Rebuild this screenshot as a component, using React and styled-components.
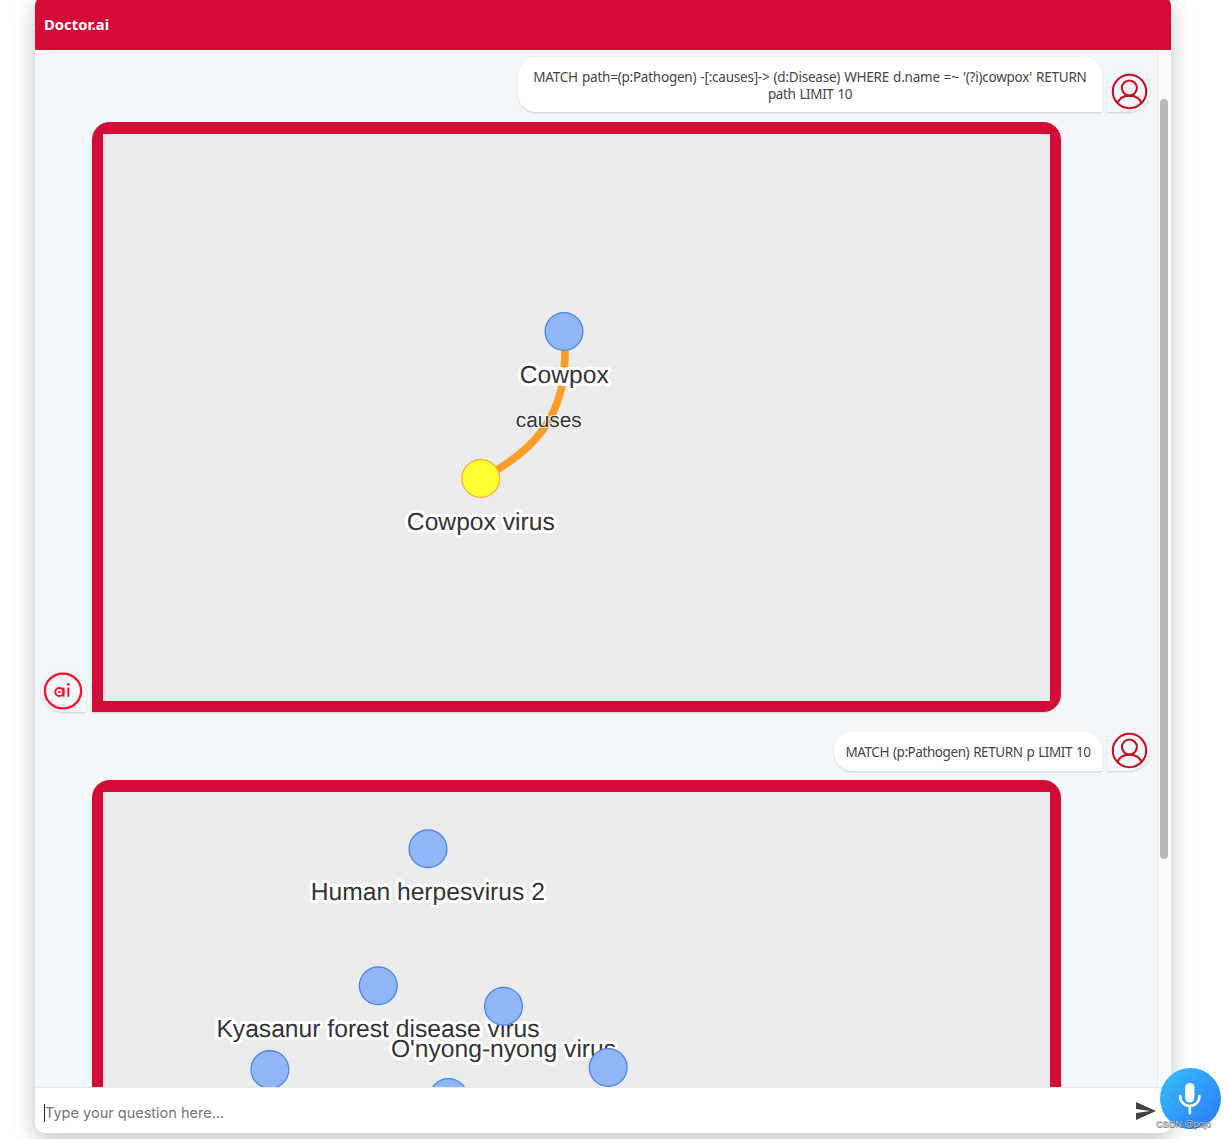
import React from 'react';
import styled, { createGlobalStyle } from 'styled-components';

const RED = '#d30b37';

const GlobalStyle = createGlobalStyle`
  * { box-sizing: border-box; }
  html, body { margin: 0; background: #fff; }
  body { height: 1139px; overflow: hidden; font-family: "Noto Sans", "Open Sans", sans-serif; }
`;

const Page = styled.div`
  position: relative;
  height: 1139px;
  overflow: hidden;
  padding-left: 35px;
`;

const Window = styled.div`
  display: flex;
  flex-direction: column;
  width: 1136px;
  height: 1137px;
  margin-top: -4px;
  border-radius: 10px;
  overflow: hidden;
  background: #fff;
  box-shadow: 0 11px 22px rgba(0, 0, 0, 0.17), 0 0 30px rgba(0, 0, 0, 0.08);
`;

const Header = styled.header`
  flex: none;
  display: flex;
  align-items: center;
  height: 54.3px;
  padding: 1px 9px 0;
  background: ${RED};
  color: #fff;
`;

const Title = styled.h1`
  margin: 0;
  font-size: 14.8px;
  line-height: 20px;
  font-weight: 700;
`;

const Body = styled.div`
  flex: 1;
  min-height: 0;
  display: flex;
  background: #f3f7fa;
`;

const Messages = styled.div`
  flex: 1;
  min-width: 0;
  overflow: hidden;
  padding: 7px 7px 0 6px;
`;

const Track = styled.div`
  flex: none;
  width: 14px;
  padding: 49px 3px 0 2px;
  background: #fafafa;
  border-left: 1px solid #e6e8ea;
`;

const Thumb = styled.div`
  width: 8px;
  height: 760px;
  border-radius: 4px;
  background: #b9b9b9;
`;

const Row = styled.div`
  display: flex;
  align-items: flex-end;
  justify-content: ${(p) => (p.$user ? 'flex-end' : 'flex-start')};
  height: ${(p) => p.$h}px;
  margin-bottom: ${(p) => p.$gap || 0}px;
  gap: ${(p) => (p.$user ? 5 : 6)}px;
`;

const Bubble = styled.div`
  width: ${(p) => p.$w}px;
  height: ${(p) => p.$h}px;
  display: flex;
  flex-direction: column;
  align-items: center;
  justify-content: center;
  padding-top: 2px;
  border-radius: 18px 18px 0 18px;
  background: #fff;
  color: #454545;
  font-size: 13.5px;
  line-height: 17px;
  word-spacing: 0.8px;
  white-space: nowrap;
  box-shadow: 0 1px 2px rgba(0, 0, 0, 0.15);
`;

const Line = styled.span`
  letter-spacing: ${(p) => p.$track || 0}px;
`;

const Avatar = styled.div`
  flex: none;
  display: flex;
  align-items: center;
  justify-content: center;
  width: ${(p) => (p.$user ? 43 : 45)}px;
  height: 43px;
  padding: ${(p) => (p.$user ? '1px 0 0 1px' : '0 2px 0 0')};
  border-radius: ${(p) => (p.$user ? '50% 50% 50% 0' : '50% 50% 0 50%')};
  box-shadow: 0 1px 2px rgba(0, 0, 0, 0.15);
  svg { display: block; }
`;

const GraphCard = styled.div`
  flex: none;
  width: 969px;
  height: 590px;
  padding: 11.5px 11px 11px 11px;
  border-radius: 18px 18px 18px 0;
  background: ${RED};
  box-shadow: 0 1px 2px rgba(0, 0, 0, 0.15);
`;

const Graph = styled.svg`
  display: block;
  background: #ebebeb;
  width: 947px;
  height: 567.5px;
  font-family: "Liberation Sans", Arial, sans-serif;
`;

const Footer = styled.footer`
  flex: none;
  display: flex;
  align-items: center;
  justify-content: space-between;
  height: 46px;
  padding: 1px 15px 0 9px;
  border-top: 1px solid #e9e9e9;
  background: #fff;
  svg { display: block; }
`;

const Prompt = styled.div`
  display: flex;
  align-items: center;
  padding-top: 3px;
  color: #757575;
  font-family: Inter, "Noto Sans", sans-serif;
  font-size: 14.52px;
  line-height: 20px;
`;

const Caret = styled.span`
  width: 1px;
  height: 18px;
  background: #222;
`;

const MicButton = styled.button`
  position: absolute;
  left: 1159.7px;
  top: 1068px;
  width: 61px;
  height: 61px;
  padding: 0;
  border: 0;
  border-radius: 50%;
  display: flex;
  align-items: center;
  justify-content: center;
  background: linear-gradient(135deg, #35bdfd 5%, #2b80fb 90%);
`;

const Watermark = styled.div`
  position: absolute;
  left: 1156px;
  top: 1118px;
  font: 9.3px/12px "Liberation Sans", Arial, sans-serif;
  letter-spacing: -0.1px;
  color: rgba(225, 228, 232, 0.95);
  text-shadow: 0 0 1px rgba(40, 40, 40, 0.8), 0.5px 0.5px 0.5px rgba(40, 40, 40, 0.6);
`;

const UserIcon = () => (
  <svg width="37" height="37" viewBox="0 0 37 37" fill="none" stroke="#c60f22" strokeWidth="2.1">
    <circle cx="18.5" cy="18.5" r="16.7" />
    <circle cx="18.4" cy="15" r="7.5" />
    <path d="M6.6 30.4C7.4 26 12 22.6 18.4 22.6S29.6 26 30.4 30.4" />
  </svg>
);

const AiIcon = () => (
  <svg width="40" height="38" viewBox="0 0 40 38" fill="none" stroke="#fb0f2b" strokeWidth="2.3">
    <ellipse cx="20" cy="19" rx="18.1" ry="17.4" />
    <circle cx="16.4" cy="20" r="4.1" strokeWidth="2" />
    <circle cx="16.4" cy="20" r="1.2" fill="#fb0f2b" stroke="none" />
    <path d="M20.6 15.4V24.8M25.3 15.4V24.8" strokeWidth="1.9" />
    <circle cx="25.3" cy="12.4" r="1.3" fill="#fb0f2b" stroke="none" />
  </svg>
);

const SendIcon = () => (
  <svg width="20" height="18" viewBox="2 3 21 18" preserveAspectRatio="none" fill="#424242">
    <path d="M2.01 21L23 12 2.01 3 2 10l15 2-15 2z" />
  </svg>
);

const MicIcon = () => (
  <svg width="24" height="34" viewBox="0 0 24 34" fill="none" stroke="#fff" strokeWidth="2.6" strokeLinecap="round">
    <rect x="7.2" y="1" width="9.2" height="19.5" rx="4.6" fill="#fff" stroke="none" />
    <path d="M2.2 14V14.4a9.6 9.6 0 0 0 19.2 0V14M11.8 24.5v6.7" />
  </svg>
);

const Node = ({ x, y, fill = '#90b6f8', stroke = '#4280ea' }) => (
  <circle cx={x} cy={y} r="18.9" fill={fill} stroke={stroke} strokeWidth="1.2" />
);

const Label = ({ x, y, size = 24.65, halo = 6, children }) => (
  <text
    x={x}
    y={y}
    textAnchor="middle"
    textRendering="geometricPrecision"
    fontSize={size}
    fill="#343434"
    stroke="#fff"
    strokeWidth={halo}
    strokeLinejoin="round"
    paintOrder="stroke"
  >
    {children}
  </text>
);

export default function App() {
  return (
    <>
      <GlobalStyle />
      <Page>
        <Window>
          <Header>
            <Title>Doctor.ai</Title>
          </Header>
          <Body>
            <Messages>
              <Row $user $h={55} $gap={10}>
                <Bubble $w={584} $h={55}>
                  <Line $track={-0.23}>MATCH path=(p:Pathogen) -[:causes]-&gt; (d:Disease) WHERE d.name =~ '(?i)cowpox' RETURN</Line>
                  <Line $track={-0.38}>path LIMIT 10</Line>
                </Bubble>
                <Avatar $user><UserIcon /></Avatar>
              </Row>
              <Row $h={590} $gap={16}>
                <Avatar><AiIcon /></Avatar>
                <GraphCard>
                  <Graph viewBox="103 134 947 567.5">
                    <path d="M564 331.5C570 399 550 444 481 478.5" fill="none" stroke="#fd9d27" strokeWidth="7.6" />
                    <Label x={548.7} y={426.6} size={20.8} halo={1.6}>causes</Label>
                    <Node x={564} y={331.5} />
                    <Label x={564.3} y={382.6}>Cowpox</Label>
                    <Node x={480.8} y={478.5} fill="#ffff33" stroke="#f9a83a" />
                    <Label x={480.8} y={529.6}>Cowpox virus</Label>
                  </Graph>
                </GraphCard>
              </Row>
              <Row $user $h={43} $gap={9}>
                <Bubble $w={268} $h={39}>
                  <Line $track={-0.42}>MATCH (p:Pathogen) RETURN p LIMIT 10</Line>
                </Bubble>
                <Avatar $user><UserIcon /></Avatar>
              </Row>
              <Row $h={590}>
                <Avatar><AiIcon /></Avatar>
                <GraphCard>
                  <Graph viewBox="103 792 947 567.5">
                    <Node x={428} y={848.8} />
                    <Label x={427.8} y={899.6}>Human herpesvirus 2</Label>
                    <Node x={378.3} y={985.8} />
                    <Label x={378} y={1036.6}>Kyasanur forest disease virus</Label>
                    <Node x={503.5} y={1006.3} />
                    <Label x={503.5} y={1057}>O'nyong-nyong virus</Label>
                    <Node x={269.9} y={1069.5} />
                    <Node x={608.2} y={1067.5} />
                    <Node x={448.5} y={1097.5} />
                  </Graph>
                </GraphCard>
              </Row>
            </Messages>
            <Track>
              <Thumb />
            </Track>
          </Body>
          <Footer>
            <Prompt>
              <Caret />
              <span>Type your question here...</span>
            </Prompt>
            <SendIcon />
          </Footer>
        </Window>
        <MicButton aria-label="Speak"><MicIcon /></MicButton>
        <Watermark>CSDN @pojo</Watermark>
      </Page>
    </>
  );
}
